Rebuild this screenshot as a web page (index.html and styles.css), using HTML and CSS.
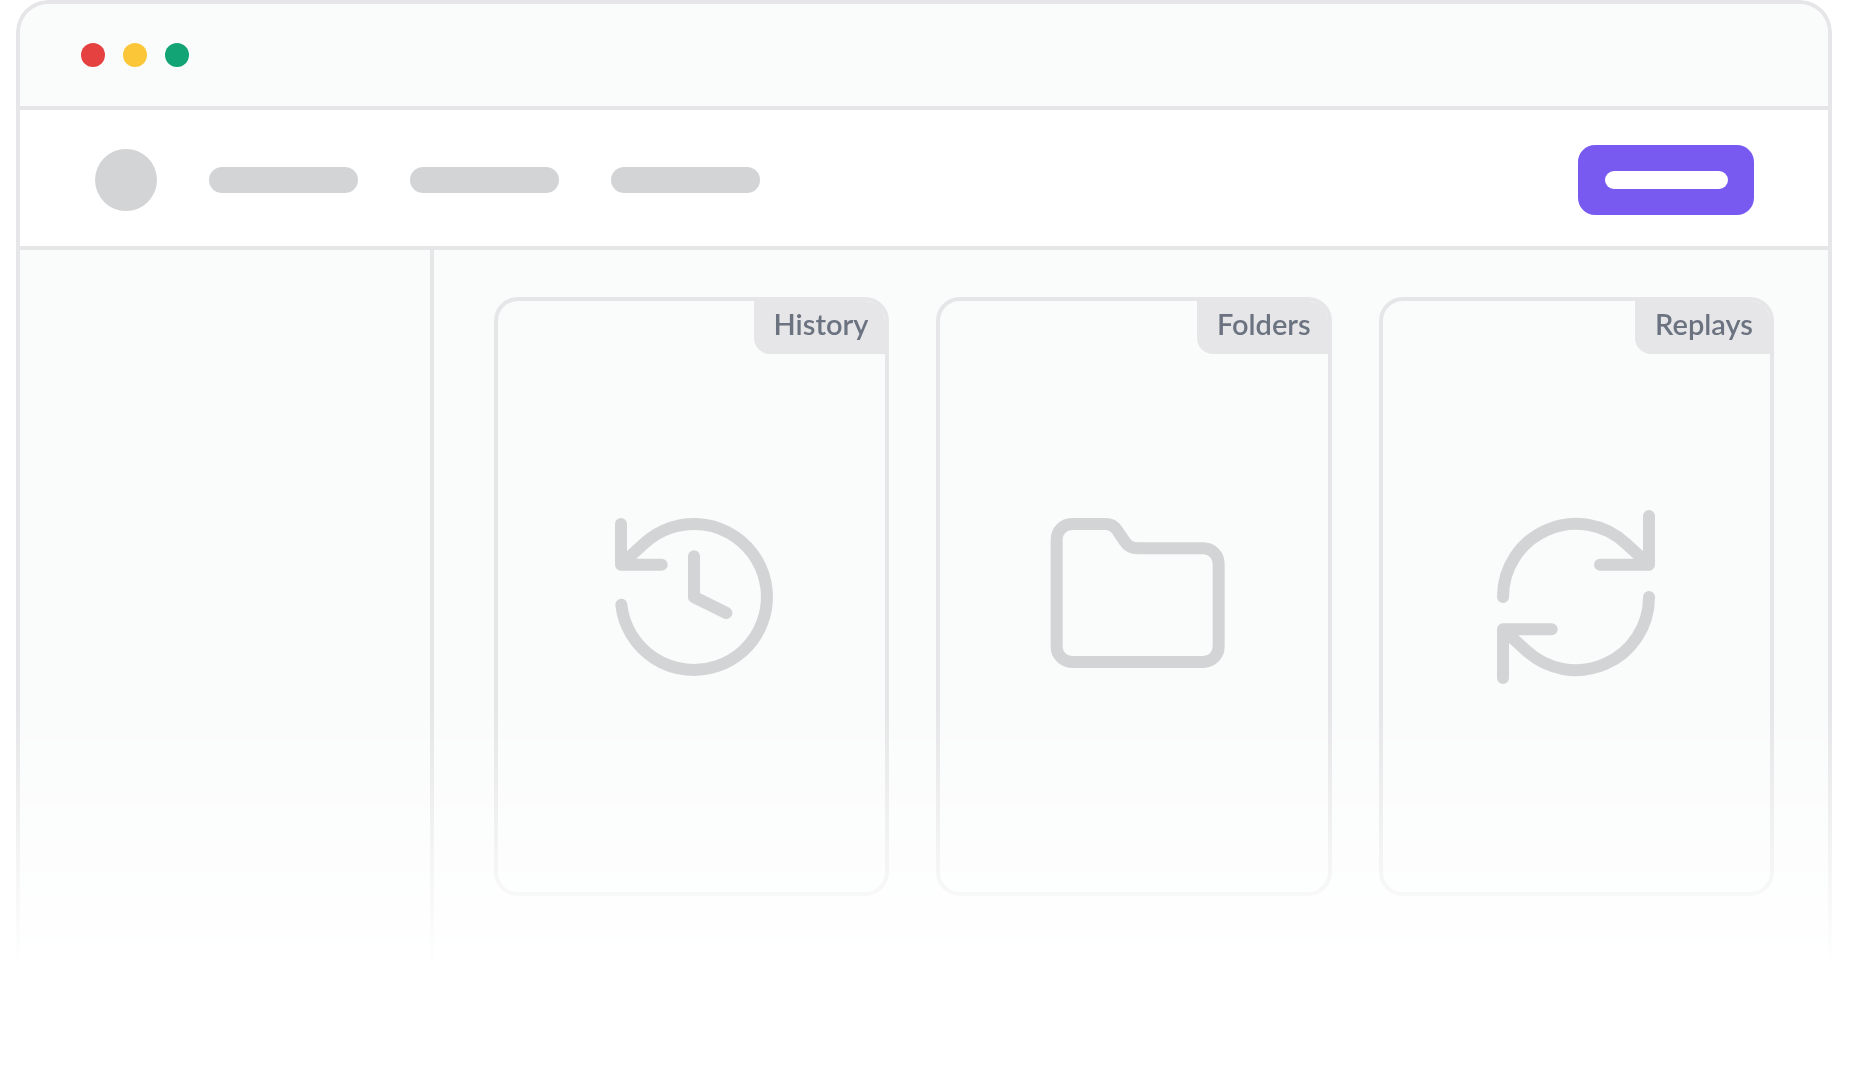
FILE: index.html
```html
<!DOCTYPE html>
<html lang="en">
<head>
  <meta charset="utf-8">
  <meta name="viewport" content="width=device-width, initial-scale=1">
  <title>Workspace preview</title>
  <link rel="stylesheet" href="styles.css">
</head>
<body>
  <div class="window">
    <div class="titlebar">
      <span class="dot dot-close"></span>
      <span class="dot dot-minimize"></span>
      <span class="dot dot-expand"></span>
    </div>
    <header class="navbar">
      <span class="avatar"></span>
      <nav class="links">
        <a class="link" href="#" aria-label="First section"></a>
        <a class="link" href="#" aria-label="Second section"></a>
        <a class="link" href="#" aria-label="Third section"></a>
      </nav>
      <button class="action" type="button" aria-label="Action"><span class="action-label"></span></button>
    </header>
    <div class="body">
      <aside class="sidebar"></aside>
      <main class="cards">
        <section class="card">
          <h2 class="tag">History</h2>
          <svg class="icon" viewBox="108 60 576 576" aria-hidden="true">
            <path d="M183 129V251H305M183 251L252 188A219 219 0 1 1 184 371M402 226V348L499 396"/>
          </svg>
        </section>
        <section class="card">
          <h2 class="tag">Folders</h2>
          <svg class="icon" viewBox="55 60 576 576" aria-hidden="true">
            <path d="M157 129H258Q279 129 292 147L315 181Q329 202 354 202H551A46 46 0 0 1 597 248V496A46 46 0 0 1 551 543H157A46 46 0 0 1 111 496V175A46 46 0 0 1 157 129Z"/>
          </svg>
        </section>
        <section class="card">
          <h2 class="tag">Replays</h2>
          <svg class="icon" viewBox="60 60 576 576" aria-hidden="true">
            <path d="M129 348A219 219 0 0 1 498 188L567 251M567 105V251H420M567 348A219 219 0 0 1 198 508L129 445M129 591V445H275"/>
          </svg>
        </section>
      </main>
    </div>
  </div>
</body>
</html>
```
FILE: styles.css
```css
:root {
  --line: #e6e6e8;
  --surface: #fafbfb;
  --shape: #d3d4d6;
}

* {
  box-sizing: border-box;
}

body {
  margin: 0;
  padding: 0 17px 0 16px;
  background: #fff;
  font-family: Lato, "Open Sans", sans-serif;
}

.window {
  overflow: hidden;
  border: 4px solid var(--line);
  border-bottom: 0;
  border-radius: 32px 32px 0 0;
  background: var(--surface);
  mask-image: linear-gradient(#000 73%, transparent);
}

.titlebar {
  display: flex;
  align-items: center;
  gap: 18px;
  height: 106px;
  padding: 0 61px;
  border-bottom: 4px solid var(--line);
}

.dot {
  width: 24px;
  height: 24px;
  border-radius: 50%;
}

.dot-close {
  background: #e64141;
}

.dot-minimize {
  background: #fbc638;
}

.dot-expand {
  background: #12a474;
}

.navbar {
  display: flex;
  align-items: center;
  gap: 52px;
  height: 140px;
  padding: 4px 74px 0 75px;
  border-bottom: 4px solid var(--line);
  background: #fff;
}

.avatar {
  width: 62px;
  height: 62px;
  border-radius: 50%;
  background: var(--shape);
}

.links {
  display: flex;
  gap: 52px;
}

.link {
  width: 149px;
  height: 26px;
  border-radius: 13px;
  background: var(--shape);
}

.action {
  display: flex;
  align-items: center;
  justify-content: center;
  width: 176px;
  height: 70px;
  margin-left: auto;
  padding: 0;
  border: 0;
  border-radius: 17px;
  background: #795af0;
}

.action-label {
  width: 123px;
  height: 18px;
  border-radius: 9px;
  background: #fff;
}

.body {
  display: flex;
}

.sidebar {
  flex: none;
  width: 414px;
  border-right: 4px solid var(--line);
}

.cards {
  flex: 1;
  display: grid;
  grid-template-columns: repeat(3, 1fr);
  gap: 47px;
  padding: 47px 54px 74px 60px;
}

.card {
  display: grid;
  height: 599px;
  overflow: hidden;
  border: 4px solid var(--line);
  border-radius: 24px;
}

.tag,
.icon {
  grid-area: 1 / 1;
}

.tag {
  place-self: start end;
  margin: 0;
  padding: 0 17px 7px 20px;
  border-bottom-left-radius: 16px;
  background: var(--line);
  color: #6b7280;
  font-size: 29px;
  font-weight: 600;
  line-height: 46px;
}

.icon {
  place-self: center;
  width: 192px;
  height: 192px;
  fill: none;
  stroke: var(--shape);
  stroke-width: 36;
  stroke-linecap: round;
  stroke-linejoin: round;
}
```
